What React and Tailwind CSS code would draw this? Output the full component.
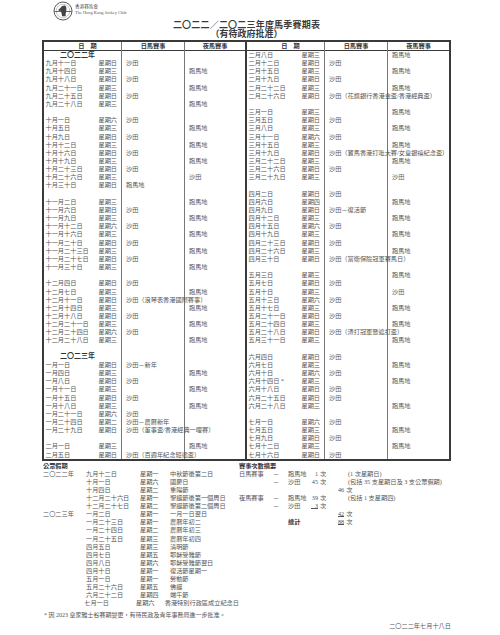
const LEFT = [
  "#二〇二二年",
  "九月十一日|星期日|沙田|",
  "九月十四日|星期三||跑馬地",
  "九月十八日|星期日|沙田|",
  "九月二十一日|星期三||跑馬地",
  "九月二十五日|星期日|沙田|",
  "九月二十八日|星期三||跑馬地",
  "",
  "十月一日|星期六|沙田|",
  "十月五日|星期三||跑馬地",
  "十月九日|星期日|沙田|",
  "十月十二日|星期三||跑馬地",
  "十月十六日|星期日|沙田|",
  "十月十九日|星期三||跑馬地",
  "十月二十三日|星期日|沙田|",
  "十月二十六日|星期三||沙田",
  "十月三十日|星期日|跑馬地|",
  "",
  "十一月二日|星期三||跑馬地",
  "十一月六日|星期日|沙田|",
  "十一月九日|星期三||跑馬地",
  "十一月十二日|星期六|沙田|",
  "十一月十六日|星期三||跑馬地",
  "十一月二十日|星期日|沙田|",
  "十一月二十三日|星期三||跑馬地",
  "十一月二十七日|星期日|沙田|",
  "十一月三十日|星期三||跑馬地",
  "",
  "十二月四日|星期日|沙田|",
  "十二月七日|星期三||跑馬地",
  "十二月十一日|星期日|沙田（浪琴表香港國際賽事）|",
  "十二月十四日|星期三||跑馬地",
  "十二月十八日|星期日|沙田|",
  "十二月二十一日|星期三||跑馬地",
  "十二月二十四日|星期六|沙田|",
  "十二月二十八日|星期三||跑馬地",
  "",
  "#二〇二三年",
  "一月一日|星期日|沙田－新年|",
  "一月四日|星期三||跑馬地",
  "一月八日|星期日|沙田|",
  "一月十一日|星期三||跑馬地",
  "一月十五日|星期日|沙田|",
  "一月十八日|星期三||跑馬地",
  "一月二十一日|星期六|沙田|",
  "一月二十四日|星期二|沙田－農曆新年|",
  "一月二十九日|星期日|沙田（董事盃/香港經典一哩賽）|",
  "",
  "二月一日|星期三||跑馬地",
  "二月五日|星期日|沙田（百週年紀念短途盃）|",
];

const RIGHT = [
  "二月八日|星期三||跑馬地",
  "二月十二日|星期日|沙田|",
  "二月十五日|星期三||跑馬地",
  "二月十九日|星期日|沙田|",
  "二月二十二日|星期三||跑馬地",
  "二月二十六日|星期日|沙田（花旗銀行香港金盃/香港經典盃）|",
  "",
  "三月一日|星期三||跑馬地",
  "三月五日|星期日|沙田|",
  "三月八日|星期三||跑馬地",
  "三月十一日|星期六|沙田|",
  "三月十五日|星期三||跑馬地",
  "三月十九日|星期日|沙田（寶馬香港打吡大賽/女皇銀禧紀念盃）|",
  "三月二十二日|星期三||跑馬地",
  "三月二十六日|星期日|沙田|",
  "三月二十九日|星期三||沙田",
  "",
  "四月二日|星期日|沙田|",
  "四月六日|星期四||跑馬地",
  "四月九日|星期日|沙田－復活節|",
  "四月十二日|星期三||跑馬地",
  "四月十五日|星期六|沙田|",
  "四月十九日|星期三||跑馬地",
  "四月二十三日|星期日|沙田|",
  "四月二十六日|星期三||跑馬地",
  "四月三十日|星期日|沙田（富衛保險冠軍賽馬日）|",
  "",
  "五月三日|星期三||跑馬地",
  "五月七日|星期日|沙田|",
  "五月十日|星期三||沙田",
  "五月十三日|星期六|沙田|",
  "五月十七日|星期三||跑馬地",
  "五月二十一日|星期日|沙田|",
  "五月二十四日|星期三||跑馬地",
  "五月二十八日|星期日|沙田（渣打冠軍暨遮打盃）|",
  "五月三十一日|星期三||跑馬地",
  "",
  "六月四日|星期日|沙田|",
  "六月七日|星期三||跑馬地",
  "六月十日|星期六|沙田|",
  "六月十四日 *|星期三||跑馬地",
  "六月十八日|星期日|沙田|",
  "六月二十五日|星期日|沙田|",
  "六月二十八日|星期三||跑馬地",
  "",
  "七月一日|星期六|沙田|",
  "七月五日|星期三||跑馬地",
  "七月九日|星期日|沙田|",
  "七月十二日|星期三||跑馬地",
  "七月十六日|星期日|沙田|",
];

const HOLIDAYS = [
  ["二〇二二年", "九月十二日", "星期一", "中秋節後第二日"],
  ["", "十月一日", "星期六", "國慶日"],
  ["", "十月四日", "星期二", "重陽節"],
  ["", "十二月二十六日", "星期一", "聖誕節後第一個周日"],
  ["", "十二月二十七日", "星期二", "聖誕節後第二個周日"],
  ["二〇二三年", "一月二日", "星期一", "一月一日翌日"],
  ["", "一月二十三日", "星期一", "農曆年初二"],
  ["", "一月二十四日", "星期二", "農曆年初三"],
  ["", "一月二十五日", "星期三", "農曆年初四"],
  ["", "四月五日", "星期三", "清明節"],
  ["", "四月七日", "星期五", "耶穌受難節"],
  ["", "四月八日", "星期六", "耶穌受難節翌日"],
  ["", "四月十日", "星期一", "復活節星期一"],
  ["", "五月一日", "星期一", "勞動節"],
  ["", "五月二十六日", "星期五", "佛誕"],
  ["", "六月二十二日", "星期四", "端午節"],
  ["", "七月一日", "星期六", "香港特別行政區成立紀念日"],
];

function Logo() {
  return (
    <svg width="20" height="20" viewBox="0 0 20 20" className="shrink-0">
      <circle cx="10" cy="10" r="9" fill="none" stroke="#444" strokeWidth="0.9" />
      <circle cx="10" cy="10" r="6.8" fill="none" stroke="#777" strokeWidth="0.4" />
      <line x1="1.5" y1="10.5" x2="18.5" y2="10.5" stroke="#444" strokeWidth="0.8" />
      <path d="M11.5 4.5 C9.5 4.5 8 5.8 7.2 7.2 L5.4 8.6 L6 10 L8 9.7 C8.3 11.6 9 13.6 9 15.2 L12.6 15.2 C12.4 12.8 13.4 10.4 13.4 8 C13.4 6 12.8 4.5 11.5 4.5 Z" fill="#444" />
    </svg>
  );
}

function Half({ rows, right }) {
  const parsed = rows.map((r) => r.split("|"));
  return (
    <div className={right ? "flex" : "flex border-r-2 border-[#3a3a3a]"}>
      <div className="flex w-[78px] flex-col border-r border-[#777]">
        <div className="flex h-[9px] items-center justify-center border-b border-[#3a3a3a] pl-[10px] font-bold text-[#333]">日　期</div>
        {parsed.map((r, i) =>
          r[0].startsWith("#") ? (
            <div key={i} className="flex h-[8.16px] items-center pl-[16px] text-[7px] font-bold text-[#333]">{r[0].slice(1)}</div>
          ) : (
            <div key={i} className="flex h-[8.16px] items-center whitespace-nowrap pl-[1.5px]">
              <span className="w-[53px]">{r[0]}</span>
              <span>{r[1] || ""}</span>
            </div>
          )
        )}
      </div>
      <div className="flex w-[63px] flex-col border-r border-[#777]">
        <div className="flex h-[9px] items-center justify-center border-b border-[#3a3a3a] font-bold text-[#333]">日馬賽事</div>
        {parsed.map((r, i) => (
          <div key={i} className="flex h-[8.16px] items-center whitespace-nowrap pl-[4px]">{r[2] || ""}</div>
        ))}
      </div>
      <div className={right ? "flex w-[61px] flex-col" : "flex w-[60px] flex-col"}>
        <div className="flex h-[9px] items-center justify-center border-b border-[#3a3a3a] font-bold text-[#333]">夜馬賽事</div>
        {parsed.map((r, i) => (
          <div key={i} className="flex h-[8.16px] items-center whitespace-nowrap pl-[4px]">{r[3] || ""}</div>
        ))}
      </div>
    </div>
  );
}

function SumRow({ label = "", dash = "", venue = "", n = "", nw = "", note = "" }) {
  return (
    <div className="flex h-[8.1px] items-center whitespace-nowrap">
      <span className="w-[34px]">{label}</span>
      <span className="w-[15px]">{dash}</span>
      <span className="w-[18px]">{venue}</span>
      <span className="flex w-[12px] justify-end">
        {n && <span className={nw ? "inline-block w-[7px] border-b border-[#555] text-right leading-[5px]" : ""}>{n}</span>}
      </span>
      <span className="w-[30px] pl-[2px]">{n ? "次" : ""}</span>
      <span>{note}</span>
    </div>
  );
}

function Sub({ n, u, bold }) {
  return (
    <div className="flex h-[8.1px] items-center whitespace-nowrap">
      <span className={bold ? "w-[99px] pl-[49px] font-bold text-[#333]" : "w-[99px]"}>{bold || ""}</span>
      <span className={u ? "border-b border-[#555] leading-[5px]" : ""}>{n}</span>
      <span className="pl-[2px]">次</span>
    </div>
  );
}

export default function App() {
  return (
    <div className="relative h-[635px] w-[500px] overflow-hidden bg-white font-['Liberation_Serif','Noto_Sans_CJK_TC',serif] text-[6.2px] leading-none text-[#555]">
      <div className="flex h-[21px] items-start pl-[53px] pt-[1px]">
        <Logo />
        <div className="ml-[2px] mt-[3px] flex flex-col text-[#555]">
          <span className="text-[4.6px] leading-[6px]">香港賽馬會</span>
          <span className="text-[4.4px] leading-[6px]">The Hong Kong Jockey Club</span>
        </div>
      </div>

      <div className="ml-[42px] w-[409px] text-center font-bold text-[#3a3a3a]">
        <div className="text-[9px] leading-[9px] tracking-[0.2px]">二〇二二／二〇二三年度馬季賽期表</div>
        <div className="text-[9px] leading-[9px]">（有待政府批准）</div>
      </div>

      <div className="ml-[42px] mt-[1px] flex w-[409px] border-2 border-[#3a3a3a]">
        <Half rows={LEFT} />
        <Half rows={RIGHT} right />
      </div>

      <div className="ml-[43px] flex">
        <div className="w-[196px]">
          <div className="mt-[1px] flex h-[8px] items-center font-bold text-[#333]">公眾假期</div>
          {HOLIDAYS.map((h, i) => (
            <div key={i} className="flex h-[8.1px] items-center whitespace-nowrap">
              <span className="w-[43px]">{h[0]}</span>
              <span className="w-[54px]">{h[1]}</span>
              <span className="w-[30px]">{h[2]}</span>
              <span>{h[3]}</span>
            </div>
          ))}
        </div>
        <div className="flex-1">
          <div className="mt-[1px] flex h-[8px] items-center font-bold text-[#333]">賽事次數摘要</div>
          <SumRow label="日馬賽事" dash="－" venue="跑馬地" n="1" note="(1 次星期日)" />
          <SumRow dash="－" venue="沙田" n="45" nw="" note="(包括 35 支星期日及 3 支公眾假期)" />
          <Sub n="46" />
          <SumRow label="夜馬賽事" dash="－" venue="跑馬地" n="39" note="(包括 1 支星期四)" />
          <SumRow dash="－" venue="沙田" n="3" nw="u" />
          <Sub n="42" u />
          <Sub n="88" u bold="總計" />
        </div>
      </div>

      <div className="ml-[44px] mt-[4px] flex h-[8px] items-center text-[6px]">* 因 2023 皇家雅士谷賽期變更，有待民政及青年事務局進一步批准。</div>
      <div className="mt-[3px] flex h-[8px] w-[451px] items-center justify-end text-[6.2px]">二〇二二年七月十八日</div>
    </div>
  );
}
